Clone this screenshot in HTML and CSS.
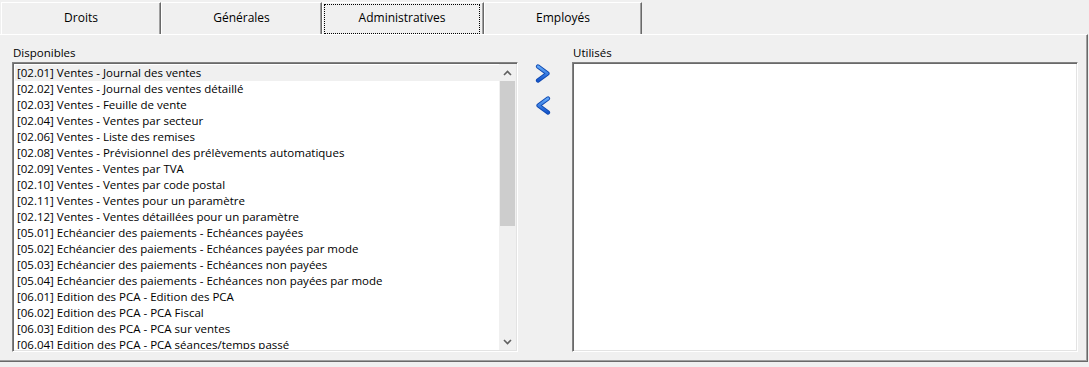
FILE: index.html
```html
<!DOCTYPE html>
<html lang="fr">
<head>
<meta charset="utf-8">
<link rel="stylesheet" href="styles.css">
</head>
<body>
<div class="tabs">
  <div class="tab">Droits</div>
  <div class="tab">Générales</div>
  <div class="tab active"><span class="focus">Administratives</span></div>
  <div class="tab">Employés</div>
</div>
<div class="panel">
  <div class="col">
    <div class="label">Disponibles</div>
    <div class="listbox">
      <ul class="items">
        <li class="sel">[02.01] Ventes - Journal des ventes</li>
        <li>[02.02] Ventes - Journal des ventes détaillé</li>
        <li>[02.03] Ventes - Feuille de vente</li>
        <li>[02.04] Ventes - Ventes par secteur</li>
        <li>[02.06] Ventes - Liste des remises</li>
        <li>[02.08] Ventes - Prévisionnel des prélèvements automatiques</li>
        <li>[02.09] Ventes - Ventes par TVA</li>
        <li>[02.10] Ventes - Ventes par code postal</li>
        <li>[02.11] Ventes - Ventes pour un paramètre</li>
        <li>[02.12] Ventes - Ventes détaillées pour un paramètre</li>
        <li>[05.01] Echéancier des paiements - Echéances payées</li>
        <li>[05.02] Echéancier des paiements - Echéances payées par mode</li>
        <li>[05.03] Echéancier des paiements - Echéances non payées</li>
        <li>[05.04] Echéancier des paiements - Echéances non payées par mode</li>
        <li>[06.01] Edition des PCA - Edition des PCA</li>
        <li>[06.02] Edition des PCA - PCA Fiscal</li>
        <li>[06.03] Edition des PCA - PCA sur ventes</li>
        <li>[06.04] Edition des PCA - PCA séances/temps passé</li>
      </ul>
      <div class="scrollbar">
        <div class="sb-btn"><svg width="9" height="6" viewBox="0 0 9 6"><path d="M1 5 L4.5 1.5 L8 5" fill="none" stroke="#606060" stroke-width="1.6"/></svg></div>
        <div class="sb-track"><div class="sb-thumb"></div></div>
        <div class="sb-btn"><svg width="9" height="6" viewBox="0 0 9 6"><path d="M1 1 L4.5 4.5 L8 1" fill="none" stroke="#606060" stroke-width="1.6"/></svg></div>
      </div>
    </div>
  </div>
  <div class="mid">
    <button class="arrow" aria-label="Ajouter">
      <svg width="16" height="19" viewBox="0 0 16 19">
        <defs><linearGradient id="g1" x1="0" y1="0" x2="0" y2="1"><stop offset="0" stop-color="#62a8f8"/><stop offset="1" stop-color="#1656cc"/></linearGradient></defs>
        <path d="M3 2.5 L12.5 9.5 L3 16.5" fill="none" stroke="#0d47b0" stroke-width="4.2" stroke-linejoin="round" stroke-linecap="round"/>
        <path d="M3 2.5 L12.5 9.5 L3 16.5" fill="none" stroke="url(#g1)" stroke-width="2.4" stroke-linejoin="round" stroke-linecap="round"/>
      </svg>
    </button>
    <button class="arrow" aria-label="Retirer">
      <svg width="16" height="19" viewBox="0 0 16 19">
        <defs><linearGradient id="g2" x1="0" y1="0" x2="0" y2="1"><stop offset="0" stop-color="#62a8f8"/><stop offset="1" stop-color="#1656cc"/></linearGradient></defs>
        <path d="M13 2.5 L3.5 9.5 L13 16.5" fill="none" stroke="#0d47b0" stroke-width="4.2" stroke-linejoin="round" stroke-linecap="round"/>
        <path d="M13 2.5 L3.5 9.5 L13 16.5" fill="none" stroke="url(#g2)" stroke-width="2.4" stroke-linejoin="round" stroke-linecap="round"/>
      </svg>
    </button>
  </div>
  <div class="col">
    <div class="label">Utilisés</div>
    <div class="listbox"></div>
  </div>
</div>
</body>
</html>
```
FILE: styles.css
```css
* { box-sizing: border-box; }
html, body { margin: 0; padding: 0; }
body {
  background: #f0f0f0;
  font-family: "Open Sans", "Noto Sans", sans-serif;
  font-size: 11.5px;
  color: #000;
  width: 1089px;
  height: 367px;
  overflow: hidden;
}
.tabs {
  display: flex;
  height: 34px;
  padding: 2px 0 0 1px;
}
.tab {
  width: 160px;
  height: 32px;
  border-top: 1px solid #ffffff;
  border-left: 1px solid #ffffff;
  border-right: 1px solid #696969;
  box-shadow: inset -1px 0 #a0a0a0;
  display: flex;
  align-items: center;
  justify-content: center;
  padding-bottom: 3px;
  font-size: 12px;
}
.tab:nth-child(2) { width: 161px; }
.tab:nth-child(4) { width: 158px; }
.tab.active {
  width: 162px;
  padding: 1px 3px 0 1px;
  align-items: stretch;
}
.focus {
  flex: 1;
  border: 1px dotted #000;
  display: flex;
  justify-content: center;
  padding-top: 4px;
}
.panel {
  height: 328px;
  width: 1088px;
  border-top: 1px solid #ffffff;
  border-right: 1px solid #696969;
  border-bottom: 1px solid #696969;
  box-shadow: inset -1px -1px #a0a0a0;
  display: flex;
  padding: 10px 0 0 12px;
}
.col {
  width: 506px;
  display: flex;
  flex-direction: column;
}
.label {
  height: 17px;
  line-height: 16px;
  padding-left: 1px;
}
.listbox {
  height: 290px;
  background: #ffffff;
  border-top: 1px solid #828282;
  border-left: 1px solid #828282;
  border-right: 1px solid #ffffff;
  border-bottom: 1px solid #ffffff;
  box-shadow: inset 1px 1px #696969, inset -1px -1px #e3e3e3;
  display: flex;
  padding: 2px;
  overflow: hidden;
}
.items {
  list-style: none;
  margin: 0;
  padding: 0;
  flex: 1;
  overflow: hidden;
}
.items li {
  height: 16px;
  line-height: 15px;
  padding-left: 2px;
  white-space: nowrap;
}
.items li.sel { background: #f0f0f0; }
.scrollbar {
  width: 17px;
  display: flex;
  flex-direction: column;
  background: #f0f0f0;
  margin: -1px -1px -1px 0;
}
.sb-btn {
  height: 17px;
  display: flex;
  align-items: center;
  justify-content: center;
}
.sb-track {
  flex: 1;
  padding: 0 1px;
}
.sb-thumb {
  height: 145px;
  background: #cdcdcd;
}
.mid {
  width: 54px;
  display: flex;
  flex-direction: column;
  align-items: center;
  padding: 19px 4px 0 0;
  gap: 13px;
}
.arrow {
  border: 0;
  background: transparent;
  padding: 0;
  width: 16px;
  height: 19px;
  display: block;
}
.arrow svg { display: block; }
```
